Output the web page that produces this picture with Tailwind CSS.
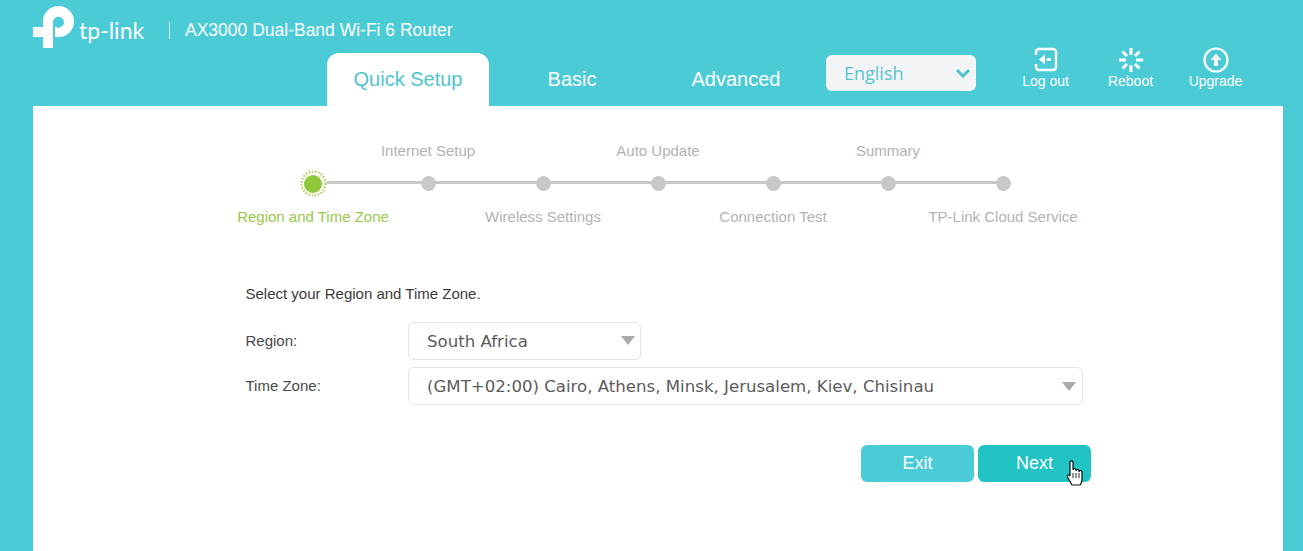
<!DOCTYPE html>
<html>
<head>
<meta charset="utf-8">
<script src="https://cdn.jsdelivr.net/npm/@tailwindcss/browser@4"></script>
</head>
<body class="h-[551px] overflow-hidden bg-[#4acbd6] font-['Liberation_Sans',Arial,sans-serif] relative">
<header class="h-[106px] flex flex-col">
  <div class="h-[53px] flex items-start pl-[33px] pt-[6px] text-white shrink-0">
    <svg class="w-[42px] h-[43px] shrink-0" viewBox="0 0 42 43" fill="none">
      <path d="M10 42 V31 H0 V21 H10 V15.5 A15.5 15.5 0 1 1 25.5 31 H22 V20.5 A5.5 5.5 0 1 0 20 15.5 V42 Z" fill="#fff"/>
    </svg>
    <span class="ml-[4px] mt-[11px] font-['Lato','Liberation_Sans',sans-serif] text-[23px] leading-[26px] w-[66px] whitespace-nowrap">tp-link</span>
    <span class="ml-[24px] mt-[16px] w-px h-[17px] bg-white/80"></span>
    <span class="ml-[15px] mt-[13px] text-[17.5px] leading-[22px] whitespace-nowrap">AX3000 Dual-Band Wi-Fi 6 Router</span>
  </div>
  <div class="flex items-start pl-[327px] h-[53px]">
    <div class="w-[162px] h-[53px] pb-[2px] bg-white rounded-t-[12px] flex items-center justify-center text-[#4fc4ce] text-[20px]">Quick Setup</div>
    <div class="w-[166px] h-[53px] pb-[2px] flex items-center justify-center text-white text-[20px]">Basic</div>
    <div class="w-[162px] h-[53px] pb-[2px] flex items-center justify-center text-white text-[20px]">Advanced</div>
    <div class="ml-[9px] mt-[2px] w-[150px] h-[36px] bg-[#f2f4f6] rounded-[6px] flex items-center justify-between pl-[18px] pr-[5px] text-[#56c5cf] text-[18px] font-['Open_Sans',sans-serif]">
      <span>English</span>
      <svg class="w-[16px] h-[10px]" viewBox="0 0 16 10" fill="none"><path d="M2 2 L8 8 L14 2" stroke="#4fc4ce" stroke-width="3"/></svg>
    </div>
    <div class="flex -mt-[6px] ml-[27px] text-white text-[14px]">
      <div class="w-[85px] flex flex-col items-center">
        <svg class="w-[26px] h-[26px]" viewBox="0 0 26 26" fill="none"><path d="M3 8 V5 a3 3 0 0 1 3 -3 H20 a3 3 0 0 1 3 3 V20 a3 3 0 0 1 -3 3 H6 a3 3 0 0 1 -3 -3 V17" stroke="#fff" stroke-width="2.4"/><path d="M6 12.5 L12 7.5 V17.5 Z" fill="#fff"/><path d="M13.5 12.5 H18" stroke="#fff" stroke-width="2.6"/></svg>
        <span class="leading-[16px]">Log out</span>
      </div>
      <div class="w-[85px] flex flex-col items-center">
        <svg class="w-[26px] h-[26px]" viewBox="0 0 26 26" fill="none" stroke="#fff" stroke-width="3"><path d="M13 1 V8 M13 18 V25 M1 13 H8 M18 13 H25 M4.5 4.5 L9 9 M17 17 L21.5 21.5 M21.5 4.5 L17 9 M9 17 L4.5 21.5"/></svg>
        <span class="leading-[16px]">Reboot</span>
      </div>
      <div class="w-[85px] flex flex-col items-center">
        <svg class="w-[26px] h-[26px]" viewBox="0 0 26 26" fill="none"><circle cx="13" cy="13" r="11.5" stroke="#fff" stroke-width="2.2"/><path d="M13 6.5 L18.5 13 H15 V19 H11 V13 H7.5 Z" fill="#fff"/></svg>
        <span class="leading-[16px]">Upgrade</span>
      </div>
    </div>
  </div>
</header>
<main class="ml-[33px] w-[1250px] h-[445px] bg-white pt-[37px]">
  <div class="relative ml-[222.5px] w-[805px] grid grid-cols-7 text-[15px] text-[#b3b3b3] text-center">
    <div class="absolute left-[57px] right-[57px] top-[38px] h-[3px] bg-[#c8c8c8]"></div>
    <div class="flex flex-col items-center relative">
      <div class="h-[16px]"></div>
      <div class="mt-[11px] w-[27px] h-[27px] rounded-full bg-white relative flex items-center justify-center">
        <svg class="absolute inset-0 w-[27px] h-[27px]" viewBox="0 0 27 27" fill="none"><circle cx="13.5" cy="13.5" r="12" stroke="#a5d04f" stroke-width="2" stroke-dasharray="1.6 1.6"/></svg>
        <div class="w-[18px] h-[18px] rounded-full bg-[#8fc93a]"></div>
      </div>
      <div class="mt-[10px] text-[#97c94a] whitespace-nowrap leading-[20px]">Region and Time Zone</div>
    </div>
    <div class="flex flex-col items-center relative">
      <div class="whitespace-nowrap leading-[16px]">Internet Setup</div>
      <div class="mt-[17px] w-[15px] h-[15px] rounded-full bg-[#c8c8c8]"></div>
    </div>
    <div class="flex flex-col items-center relative">
      <div class="h-[16px]"></div>
      <div class="mt-[17px] w-[15px] h-[15px] rounded-full bg-[#c8c8c8]"></div>
      <div class="mt-[16px] whitespace-nowrap leading-[20px]">Wireless Settings</div>
    </div>
    <div class="flex flex-col items-center relative">
      <div class="whitespace-nowrap leading-[16px]">Auto Update</div>
      <div class="mt-[17px] w-[15px] h-[15px] rounded-full bg-[#c8c8c8]"></div>
    </div>
    <div class="flex flex-col items-center relative">
      <div class="h-[16px]"></div>
      <div class="mt-[17px] w-[15px] h-[15px] rounded-full bg-[#c8c8c8]"></div>
      <div class="mt-[16px] whitespace-nowrap leading-[20px]">Connection Test</div>
    </div>
    <div class="flex flex-col items-center relative">
      <div class="whitespace-nowrap leading-[16px]">Summary</div>
      <div class="mt-[17px] w-[15px] h-[15px] rounded-full bg-[#c8c8c8]"></div>
    </div>
    <div class="flex flex-col items-center relative">
      <div class="h-[16px]"></div>
      <div class="mt-[17px] w-[15px] h-[15px] rounded-full bg-[#c8c8c8]"></div>
      <div class="mt-[16px] whitespace-nowrap leading-[20px]">TP-Link Cloud Service</div>
    </div>
  </div>
  <div class="ml-[212.5px] mt-[57px] w-[837.5px] text-[15px] text-[#4a4a4a]">
    <p class="leading-[20px] text-[#3c3c3c]">Select your Region and Time Zone.</p>
    <div class="flex items-center mt-[18px]">
      <label class="w-[162.5px]">Region:</label>
      <div class="w-[233px] h-[38px] border border-[#e4e4e4] rounded-[6px] flex items-center justify-between pl-[18px] pr-[5px] text-[#5c5c5c] text-[16.6px] font-['DejaVu_Sans',sans-serif]">
        <span class="pt-[3px]">South Africa</span>
        <svg class="w-[14px] h-[9px] -mt-[1px]" viewBox="0 0 14 9"><path d="M0 0 H14 L7 9 Z" fill="#aaa"/></svg>
      </div>
    </div>
    <div class="flex items-center mt-[7px]">
      <label class="w-[162.5px]">Time Zone:</label>
      <div class="w-[675px] h-[38px] border border-[#e4e4e4] rounded-[6px] flex items-center justify-between pl-[18px] pr-[6px] text-[#5c5c5c] text-[16.6px] font-['DejaVu_Sans',sans-serif]">
        <span class="pt-[3px]">(GMT+02:00) Cairo, Athens, Minsk, Jerusalem, Kiev, Chisinau</span>
        <svg class="w-[14px] h-[9px]" viewBox="0 0 14 9"><path d="M0 0 H14 L7 9 Z" fill="#aaa"/></svg>
      </div>
    </div>
    <div class="flex justify-end gap-[4px] mt-[40px] text-white text-[18px]">
      <button class="w-[113px] h-[37px] rounded-[6px] bg-[#4acbd6]">Exit</button>
      <button class="w-[113px] h-[37px] rounded-[6px] bg-[#22c3c5] -mr-[8px]">Next</button>
    </div>
  </div>
</main>
<svg class="absolute left-[1066px] top-[460px] w-[19px] h-[26px]" viewBox="0 0 19 26">
  <path d="M4 2 a1.6 1.6 0 0 1 3 0 V10 a1.5 1.5 0 0 1 3 0 V11 a1.5 1.5 0 0 1 3 0 V12 a1.5 1.5 0 0 1 3 0 V18 C16 22 15 24 14 25 H6 L1.5 17 C1 15 3 14 4 16 Z" fill="#fff" stroke="#111" stroke-width="1.2"/>
  <path d="M7 13 V18 M10 13 V18 M13 13 V18" stroke="#111" stroke-width="0.9"/>
</svg>
</body>
</html>
